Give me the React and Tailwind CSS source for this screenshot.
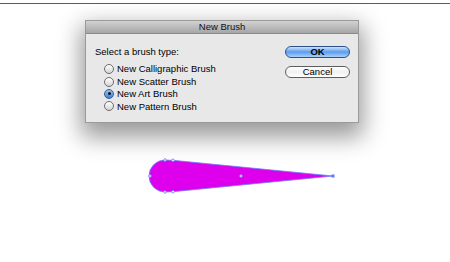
import React from "react";

function Radio({ checked }) {
  return (
    <span
      className={
        "relative flex h-[10px] w-[10px] shrink-0 items-center justify-center rounded-full border " +
        (checked
          ? "border-[#3a5c9a] bg-gradient-to-b from-[#9cc3f0] to-[#3d7fd6]"
          : "border-[#6e6e6e] bg-gradient-to-b from-[#ffffff] to-[#d4d4d4]")
      }
    >
      {checked && <span className="h-[3px] w-[3px] rounded-full bg-[#111]" />}
    </span>
  );
}

export default function App() {
  const items = [
    ["New Calligraphic Brush", false],
    ["New Scatter Brush", false],
    ["New Art Brush", true],
    ["New Pattern Brush", false],
  ];
  return (
    <div
      className="flex h-[262px] w-[450px] flex-col overflow-hidden bg-white text-black"
      style={{ fontFamily: '"Liberation Sans", Arial, sans-serif' }}
    >
      <div className="mt-[3px] h-[1px] w-full shrink-0 bg-[#5c5c5c]" />
      <div className="mt-[16px] ml-[85px] flex h-[103px] w-[274px] shrink-0 flex-col border border-[#9a9a9a] bg-[#e8e8e8] shadow-[0_10px_22px_4px_rgba(0,0,0,0.4)]">
        <div className="flex h-[13px] shrink-0 items-center justify-center border-b border-[#8a8a8a] bg-gradient-to-b from-[#d2d2d2] to-[#a6a6a6] text-[9.5px] leading-none text-[#111]">
          New Brush
        </div>
        <div className="flex flex-1 justify-between pt-[12px] pr-[8px] pl-[9px]">
          <div className="flex flex-col">
            <div className="h-[12px] text-[9.5px] leading-[12px]">Select a brush type:</div>
            <div className="mt-[5px] ml-[9px] flex flex-col">
              {items.map(([label, checked]) => (
                <div key={label} className="flex h-[12.4px] items-center gap-[3px] text-[9.5px] leading-none">
                  <Radio checked={checked} />
                  <span>{label}</span>
                </div>
              ))}
            </div>
          </div>
          <div className="flex flex-col gap-[8px]">
            <div className="flex h-[12px] w-[65px] items-center justify-center rounded-full border border-[#2d4f8c] bg-gradient-to-b from-[#cfe3fb] via-[#5d9cec] to-[#a9d2fb] text-[9.5px] font-bold leading-none">
              OK
            </div>
            <div className="flex h-[12px] w-[65px] items-center justify-center rounded-full border border-[#5e5e5e] bg-gradient-to-b from-[#ffffff] via-[#f0f0f0] to-[#ffffff] text-[9.5px] leading-none">
              Cancel
            </div>
          </div>
        </div>
      </div>
      <svg className="mt-[27px] shrink-0" width="450" height="60" viewBox="0 150 450 60">
        <path
          d="M165 160 L173 160.3 L333 176 L173 191.7 L165 192 A16 16 0 0 1 165 160 Z"
          fill="#de00ec"
          stroke="#6a7cff"
          strokeWidth="0.8"
        />
        {[
          [150, 176],
          [165, 160],
          [173, 160.3],
          [165, 192],
          [173, 191.7],
          [241, 176],
        ].map(([x, y]) => (
          <circle key={x + "-" + y} cx={x} cy={y} r="1.3" fill="#ffffff" stroke="#6a7cff" strokeWidth="0.8" />
        ))}
        <rect x="331.5" y="174.5" width="3" height="3" fill="#5a7cff" />
      </svg>
    </div>
  );
}
